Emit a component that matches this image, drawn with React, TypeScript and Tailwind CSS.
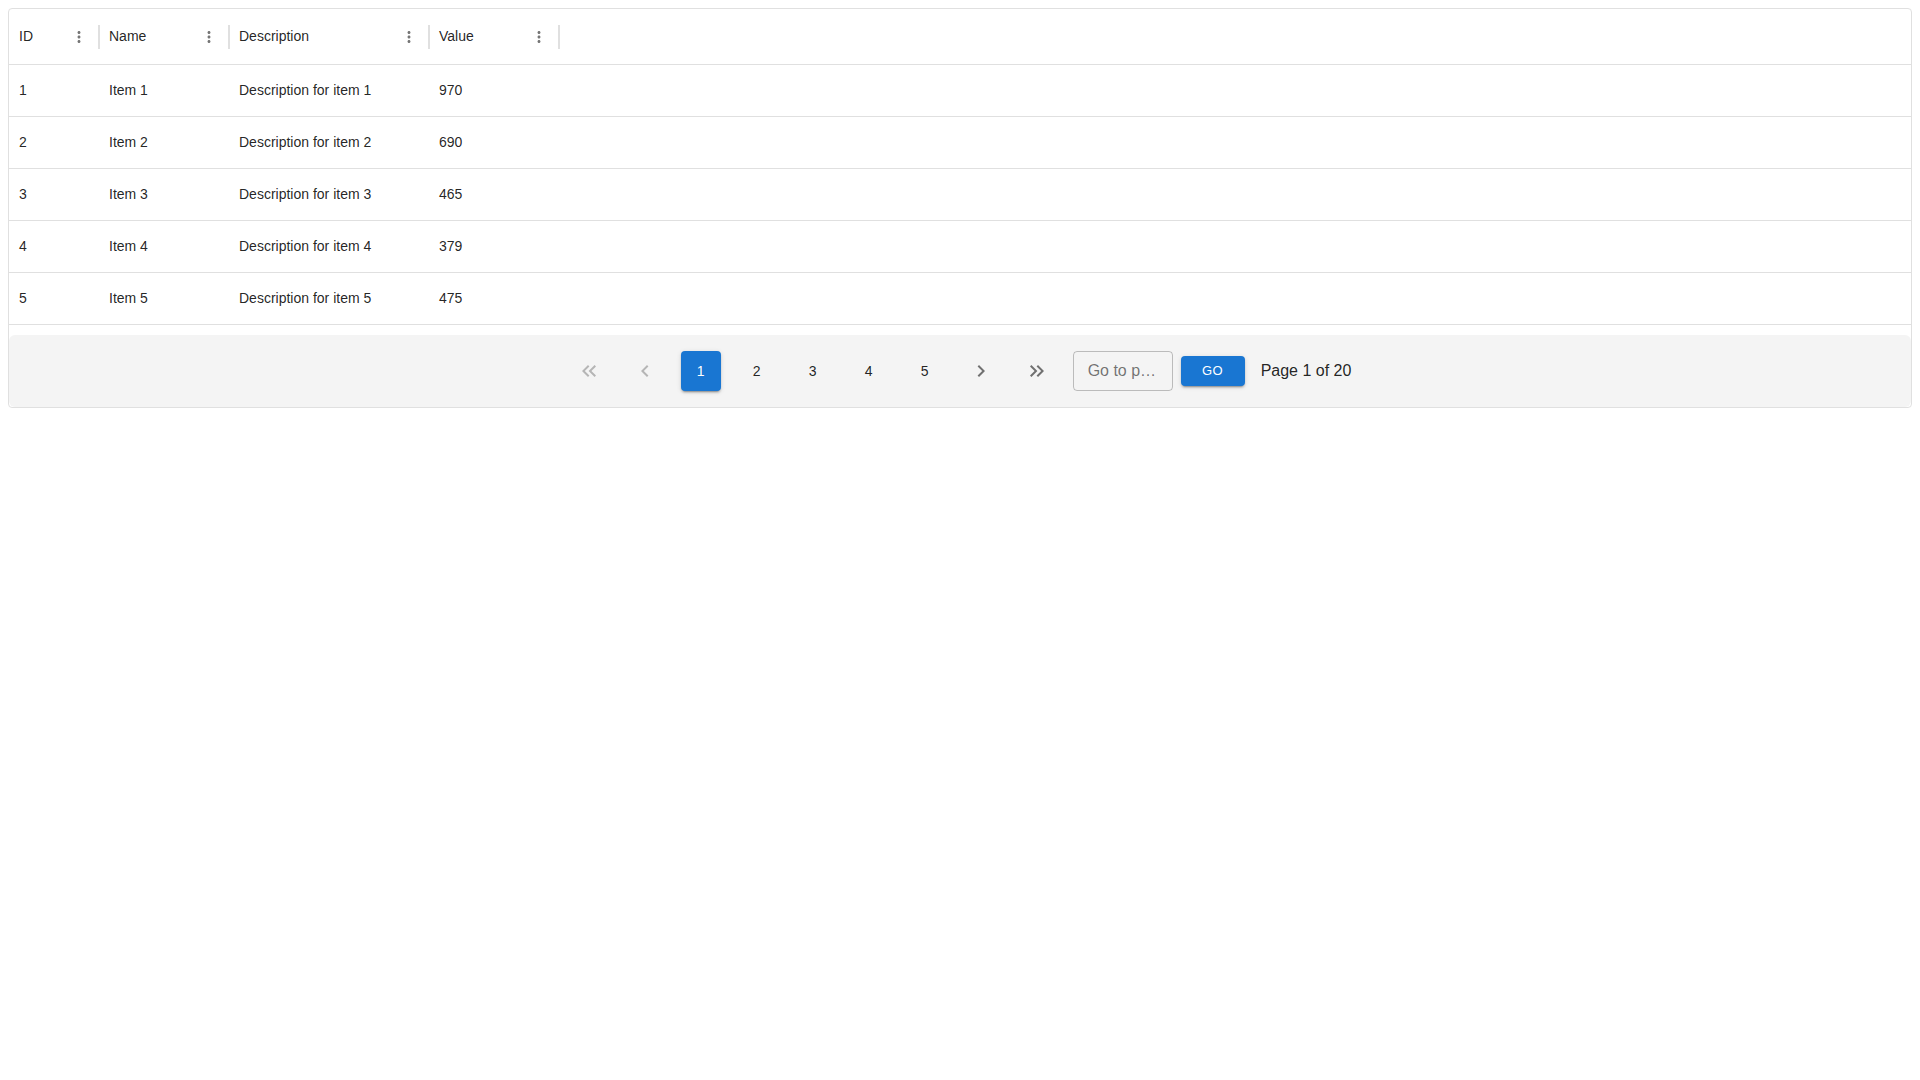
import React from "react";

const rows = [
  { id: 1, name: "Item 1", desc: "Description for item 1", value: 970 },
  { id: 2, name: "Item 2", desc: "Description for item 2", value: 690 },
  { id: 3, name: "Item 3", desc: "Description for item 3", value: 465 },
  { id: 4, name: "Item 4", desc: "Description for item 4", value: 379 },
  { id: 5, name: "Item 5", desc: "Description for item 5", value: 475 },
];

function Dots() {
  return (
    <svg width="18" height="18" viewBox="0 0 24 24" fill="#757575">
      <path d="M12 8c1.1 0 2-.9 2-2s-.9-2-2-2-2 .9-2 2 .9 2 2 2zm0 2c-1.1 0-2 .9-2 2s.9 2 2 2 2-.9 2-2-.9-2-2-2zm0 6c-1.1 0-2 .9-2 2s.9 2 2 2 2-.9 2-2-.9-2-2-2z" />
    </svg>
  );
}

function HeaderCell({ title, w }: { title: string; w: string }) {
  return (
    <div className={`relative flex items-center pl-[10px] pr-[10px] ${w}`}>
      <span className="flex-1 text-[14px] text-[rgba(0,0,0,0.87)]">{title}</span>
      <span className="flex w-[20px] items-center justify-center">
        <Dots />
      </span>
      <span className="absolute right-[-1px] top-1/2 h-[24px] w-[2px] -translate-y-1/2 bg-[#e0e0e0]" />
    </div>
  );
}

function Icon({ d, color }: { d: string; color: string }) {
  return (
    <svg width="24" height="24" viewBox="0 0 24 24" fill={color}>
      <path d={d} />
    </svg>
  );
}

const shadow =
  "shadow-[0px_3px_1px_-2px_rgba(0,0,0,0.2),0px_2px_2px_0px_rgba(0,0,0,0.14),0px_1px_5px_0px_rgba(0,0,0,0.12)]";

export default function App() {
  const widths = ["w-[90px]", "w-[130px]", "w-[200px]", "w-[130px]"];
  return (
    <div className="min-h-screen bg-white p-2 font-['Liberation_Sans',Arial,sans-serif]">
      <div className="rounded-[4px] border border-[#e0e0e0] bg-white">
        <div className="flex h-[56px] border-b border-[#e0e0e0]">
          <HeaderCell title="ID" w="w-[90px]" />
          <HeaderCell title="Name" w="w-[130px]" />
          <HeaderCell title="Description" w="w-[200px]" />
          <HeaderCell title="Value" w="w-[130px]" />
        </div>
        {rows.map((r) => (
          <div
            key={r.id}
            className="flex h-[52px] items-center border-b border-[#e0e0e0] text-[14px] text-[rgba(0,0,0,0.87)]"
          >
            <div className={`${widths[0]} pl-[10px]`}>{r.id}</div>
            <div className={`${widths[1]} pl-[10px]`}>{r.name}</div>
            <div className={`${widths[2]} pl-[10px]`}>{r.desc}</div>
            <div className={`${widths[3]} pl-[10px]`}>{r.value}</div>
          </div>
        ))}
        <div className="h-[10px]" />
        <div className="flex h-[72px] items-center justify-center rounded-[6px] bg-[#f4f4f4]">
          <div className="flex items-center gap-4">
            <button className="flex h-[40px] w-[40px] items-center justify-center">
              <Icon
                color="rgba(0,0,0,0.26)"
                d="M17.59 18 19 16.59 14.42 12 19 7.41 17.59 6l-6 6zM11 18l1.41-1.41L7.83 12l4.58-4.59L11 6l-6 6z"
              />
            </button>
            <button className="flex h-[40px] w-[40px] items-center justify-center">
              <Icon color="rgba(0,0,0,0.26)" d="M15.41 7.41 14 6l-6 6 6 6 1.41-1.41L10.83 12z" />
            </button>
            <button
              className={`flex h-[40px] w-[40px] items-center justify-center rounded-[4px] bg-[#1976d2] text-[14px] text-white ${shadow}`}
            >
              1
            </button>
            {[2, 3, 4, 5].map((n) => (
              <button
                key={n}
                className="flex h-[40px] w-[40px] items-center justify-center text-[14px] text-[rgba(0,0,0,0.87)]"
              >
                {n}
              </button>
            ))}
            <button className="flex h-[40px] w-[40px] items-center justify-center">
              <Icon color="rgba(0,0,0,0.54)" d="M10 6 8.59 7.41 13.17 12l-4.58 4.59L10 18l6-6z" />
            </button>
            <button className="flex h-[40px] w-[40px] items-center justify-center">
              <Icon
                color="rgba(0,0,0,0.54)"
                d="M6.41 6 5 7.41 9.58 12 5 16.59 6.41 18l6-6zM13 6l-1.41 1.41L16.17 12l-4.58 4.59L13 18l6-6z"
              />
            </button>
          </div>
          <input
            placeholder="Go to page"
            className="ml-4 h-[40px] w-[100px] text-ellipsis rounded-[4px] border border-[rgba(0,0,0,0.23)] bg-transparent px-[14px] text-[16px] text-[rgba(0,0,0,0.87)] outline-none placeholder:text-[rgba(0,0,0,0.55)]"
          />
          <button
            className={`ml-2 flex h-[30px] w-[64px] items-center justify-center rounded-[4px] bg-[#1976d2] text-[13px] font-normal uppercase tracking-[0.46px] text-white ${shadow}`}
          >
            Go
          </button>
          <span className="ml-4 text-[16px] text-[rgba(0,0,0,0.87)]">Page 1 of 20</span>
        </div>
      </div>
    </div>
  );
}
